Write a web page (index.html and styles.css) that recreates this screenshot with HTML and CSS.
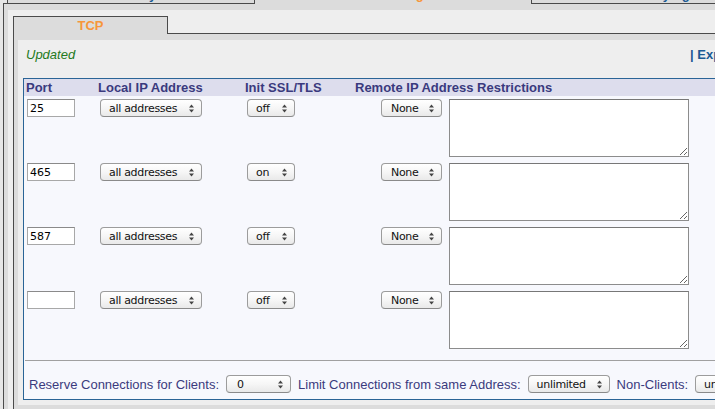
FILE: index.html
```html
<!DOCTYPE html>
<html lang="en">
<head>
<meta charset="utf-8">
<title>SMTP Receiving - TCP</title>
<link rel="stylesheet" href="styles.css">
</head>
<body>
<div class="page">
  <div class="tabs1">
    <div class="t1-spacer"></div>
    <div class="t1 t1-first"><span class="t1-label">Delivery</span></div>
    <div class="t1 t1-active"><span class="t1-label">Receiving</span></div>
    <div class="t1 t1-last"><span class="t1-label">Relaying</span></div>
  </div>
  <div class="panel1">
    <div class="inner1">
      <div class="tabs2">
        <div class="t2-active">TCP</div>
        <div class="t2-fill"></div>
      </div>
      <div class="panel2">
        <div class="inner2">
          <div class="status">
            <span class="updated">Updated</span>
            <span class="links"><span class="sep">|</span> Export</span>
          </div>
          <div class="box">
            <div class="head">
              <div class="hc">Port</div>
              <div class="hc">Local IP Address</div>
              <div class="hc">Init SSL/TLS</div>
              <div class="hc">Remote IP Address Restrictions</div>
            </div>

            <div class="row">
              <div class="c1"><input class="port" type="text" value="25"></div>
              <div class="c2"><span class="sel w-addr"><span>all addresses</span><svg class="arr" width="5" height="9" viewBox="0 0 5 9"><path d="M0 3.6L2.5 0.4L5 3.6Z M0 5.4L2.5 8.6L5 5.4Z"/></svg></span></div>
              <div class="c3"><span class="sel w-ssl"><span>off</span><svg class="arr" width="5" height="9" viewBox="0 0 5 9"><path d="M0 3.6L2.5 0.4L5 3.6Z M0 5.4L2.5 8.6L5 5.4Z"/></svg></span></div>
              <div class="c4"><span class="sel w-none"><span>None</span><svg class="arr" width="5" height="9" viewBox="0 0 5 9"><path d="M0 3.6L2.5 0.4L5 3.6Z M0 5.4L2.5 8.6L5 5.4Z"/></svg></span><textarea class="ta"></textarea></div>
            </div>

            <div class="row">
              <div class="c1"><input class="port" type="text" value="465"></div>
              <div class="c2"><span class="sel w-addr"><span>all addresses</span><svg class="arr" width="5" height="9" viewBox="0 0 5 9"><path d="M0 3.6L2.5 0.4L5 3.6Z M0 5.4L2.5 8.6L5 5.4Z"/></svg></span></div>
              <div class="c3"><span class="sel w-ssl"><span>on</span><svg class="arr" width="5" height="9" viewBox="0 0 5 9"><path d="M0 3.6L2.5 0.4L5 3.6Z M0 5.4L2.5 8.6L5 5.4Z"/></svg></span></div>
              <div class="c4"><span class="sel w-none"><span>None</span><svg class="arr" width="5" height="9" viewBox="0 0 5 9"><path d="M0 3.6L2.5 0.4L5 3.6Z M0 5.4L2.5 8.6L5 5.4Z"/></svg></span><textarea class="ta"></textarea></div>
            </div>

            <div class="row">
              <div class="c1"><input class="port" type="text" value="587"></div>
              <div class="c2"><span class="sel w-addr"><span>all addresses</span><svg class="arr" width="5" height="9" viewBox="0 0 5 9"><path d="M0 3.6L2.5 0.4L5 3.6Z M0 5.4L2.5 8.6L5 5.4Z"/></svg></span></div>
              <div class="c3"><span class="sel w-ssl"><span>off</span><svg class="arr" width="5" height="9" viewBox="0 0 5 9"><path d="M0 3.6L2.5 0.4L5 3.6Z M0 5.4L2.5 8.6L5 5.4Z"/></svg></span></div>
              <div class="c4"><span class="sel w-none"><span>None</span><svg class="arr" width="5" height="9" viewBox="0 0 5 9"><path d="M0 3.6L2.5 0.4L5 3.6Z M0 5.4L2.5 8.6L5 5.4Z"/></svg></span><textarea class="ta"></textarea></div>
            </div>

            <div class="row">
              <div class="c1"><input class="port" type="text" value=""></div>
              <div class="c2"><span class="sel w-addr"><span>all addresses</span><svg class="arr" width="5" height="9" viewBox="0 0 5 9"><path d="M0 3.6L2.5 0.4L5 3.6Z M0 5.4L2.5 8.6L5 5.4Z"/></svg></span></div>
              <div class="c3"><span class="sel w-ssl"><span>off</span><svg class="arr" width="5" height="9" viewBox="0 0 5 9"><path d="M0 3.6L2.5 0.4L5 3.6Z M0 5.4L2.5 8.6L5 5.4Z"/></svg></span></div>
              <div class="c4"><span class="sel w-none"><span>None</span><svg class="arr" width="5" height="9" viewBox="0 0 5 9"><path d="M0 3.6L2.5 0.4L5 3.6Z M0 5.4L2.5 8.6L5 5.4Z"/></svg></span><textarea class="ta"></textarea></div>
            </div>

            <div class="foot">
              <span class="flabel">Reserve Connections for Clients:</span>
              <span class="sel w-res"><span>0</span><svg class="arr" width="5" height="9" viewBox="0 0 5 9"><path d="M0 3.6L2.5 0.4L5 3.6Z M0 5.4L2.5 8.6L5 5.4Z"/></svg></span>
              <span class="flabel">Limit Connections from same Address:</span>
              <span class="sel w-unl"><span>unlimited</span><svg class="arr" width="5" height="9" viewBox="0 0 5 9"><path d="M0 3.6L2.5 0.4L5 3.6Z M0 5.4L2.5 8.6L5 5.4Z"/></svg></span>
              <span class="flabel">Non-Clients:</span>
              <span class="sel w-unl"><span>unlimited</span><svg class="arr" width="5" height="9" viewBox="0 0 5 9"><path d="M0 3.6L2.5 0.4L5 3.6Z M0 5.4L2.5 8.6L5 5.4Z"/></svg></span>
            </div>
          </div>
        </div>
      </div>
    </div>
  </div>
</div>
</body>
</html>
```

FILE: styles.css
```css
html, body {
  margin: 0;
  padding: 0;
  overflow: hidden;
}
body {
  background: #e6e6e6;
  font-family: "Liberation Sans", Arial, sans-serif;
  font-size: 13px;
}
.page {
  width: 1000px;
}

/* first-level tabs (cut off at the top) */
.tabs1 {
  display: flex;
  margin-left: 3px;
  height: 4px;
}
.t1-spacer {
  width: 4px;
  height: 4px;
  box-sizing: border-box;
  border-bottom: 1px solid #4a4a4a;
}
.t1 {
  height: 4px;
  box-sizing: border-box;
  overflow: hidden;
  background: #dcdcdc;
  text-align: center;
}
.t1-first {
  width: 248px;
  border-left: 1px solid #4a4a4a;
  border-right: 1px solid #4a4a4a;
  border-bottom: 1px solid #4a4a4a;
}
.t1-active {
  width: 276px;
}
.t1-last {
  width: 263px;
  border-left: 1px solid #4a4a4a;
  border-right: 1px solid #4a4a4a;
  border-bottom: 1px solid #4a4a4a;
}
.t1-label {
  display: block;
  margin-top: -12px;
  line-height: 13px;
  font-weight: bold;
  color: #1c5a94;
}
.t1-active .t1-label {
  color: #f7963a;
}

.panel1 {
  margin-left: 3px;
  border-left: 1px solid #4a4a4a;
  background: #dcdcdc;
  padding: 6px 0 0 4px;
}
.inner1 {
  background: #eeeeee;
  padding: 6px 0 0 5px;
}

/* second-level tabs */
.tabs2 {
  display: flex;
}
.t2-active {
  width: 155px;
  height: 18px;
  box-sizing: border-box;
  border: 1px solid #4a4a4a;
  border-bottom: none;
  background: #dcdcdc;
  text-align: center;
  line-height: 17px;
  font-weight: bold;
  color: #f7963a;
}
.t2-fill {
  flex: 1;
  height: 18px;
  box-sizing: border-box;
  border-bottom: 1px solid #4a4a4a;
}
.panel2 {
  border-left: 1px solid #4a4a4a;
  background: #dcdcdc;
  padding: 6px 0 5px 4px;
}
.inner2 {
  background: #eeeeee;
  padding: 0 0 5px 5px;
}

.status {
  display: grid;
  grid-template-columns: 664px auto;
  padding: 7px 0 15px 3px;
  line-height: 16px;
}
.updated {
  font-style: italic;
  color: #1f7a22;
}
.links {
  font-weight: bold;
  color: #1c5a94;
}

/* table box */
.box {
  width: 900px;
  border: 1px solid #2a6496;
  background: #f7f8fd;
}
.head {
  display: grid;
  grid-template-columns: 72px 147px 110px 1fr;
  height: 17px;
  line-height: 17px;
  background: #dddded;
  font-weight: bold;
  color: #3a3a7e;
}
.hc {
  padding-left: 2px;
  white-space: nowrap;
}
.row {
  display: grid;
  grid-template-columns: 72px 147px 110px 1fr;
  align-items: start;
  padding: 3px 0;
  height: 58px;
}
.c1 { padding-left: 3px; }
.c2 { padding-left: 4px; }
.c3 { padding-left: 4px; }
.c4 {
  display: flex;
  align-items: flex-start;
  gap: 7px;
  padding-left: 28px;
}

.port {
  display: block;
  box-sizing: border-box;
  width: 48px;
  height: 18px;
  margin: 0;
  padding: 0 2px;
  border: 1px solid #a8a8a8;
  border-top-color: #8a8a8a;
  background: #fff;
  font-family: "DejaVu Sans", sans-serif;
  font-size: 11px;
  color: #000;
  outline: none;
}

.sel {
  display: inline-flex;
  align-items: center;
  justify-content: space-between;
  box-sizing: border-box;
  height: 18px;
  padding: 0 7px 0 8px;
  border: 1px solid #9c9c9c;
  border-bottom-color: #8a8a8a;
  border-radius: 4px;
  background: linear-gradient(#ffffff, #f6f6f6 50%, #e9e9e9);
  font-family: "DejaVu Sans", sans-serif;
  font-size: 11px;
  letter-spacing: -0.3px;
  color: #111;
  white-space: nowrap;
  flex-shrink: 0;
}
.arr {
  display: block;
  fill: #444;
}
.w-addr { width: 102px; }
.w-ssl { width: 48px; }
.w-none { width: 61px; padding-left: 9px; }
.w-res { width: 65px; padding-left: 10px; }
.w-unl { width: 82px; }

.ta {
  display: block;
  box-sizing: border-box;
  width: 240px;
  height: 58px;
  margin: 0;
  padding: 2px;
  border: 1px solid #8c8c8c;
  border-top-color: #777;
  background: #fff;
  outline: none;
}

.foot {
  display: flex;
  align-items: center;
  gap: 7px;
  margin: 8px 0 0 1px;
  border-top: 1px solid #a0a0a0;
  padding: 14px 0 6px 4px;
  height: 18px;
  color: #3b3b7e;
  white-space: nowrap;
}
```
